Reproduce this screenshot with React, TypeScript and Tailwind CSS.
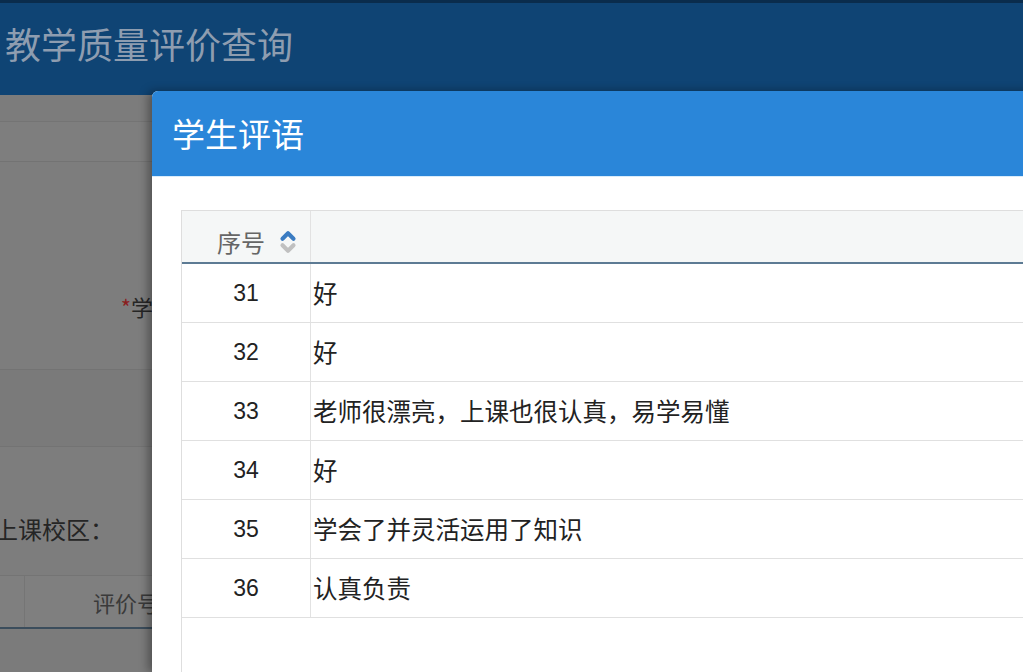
import { ChevronDown, ChevronUp } from 'lucide-react';

const rows = [
  { id: 31, text: '好' },
  { id: 32, text: '好' },
  { id: 33, text: '老师很漂亮，上课也很认真，易学易懂' },
  { id: 34, text: '好' },
  { id: 35, text: '学会了并灵活运用了知识' },
  { id: 36, text: '认真负责' },
];

const cjk = { fontFamily: '"Noto Sans CJK SC", "Noto Sans", sans-serif' };
const num = { fontFamily: '"Liberation Sans", Arial, sans-serif' };

function BackgroundPage() {
  return (
    <div className="flex flex-col h-full">
      <div className="h-[95px] shrink-0 bg-[#0f4474] border-t-[3px] border-[#0a2c4c] flex items-start pt-[22px] pl-[5px]">
        <span className="text-[36px] text-[#8e9db0] leading-none" style={cjk}>
          教学质量评价查询
        </span>
      </div>
      <div className="h-[27px] shrink-0 bg-[#7c7c7c] border-b border-[#747474]" />
      <div className="h-[40px] shrink-0 bg-[#7e7e7e] border-b border-[#737373]" />
      <div className="h-[208px] shrink-0 bg-[#7d7d7d] border-b border-[#737373] flex items-end justify-end pr-[870px] pb-[52px]">
        <span className="text-[22px] text-[#262626] leading-none" style={cjk}>
          <span className="text-[#8a1f1f]">*</span>学
        </span>
      </div>
      <div className="h-[77px] shrink-0 bg-[#7a7a7a] border-b border-[#737373]" />
      <div className="h-[128px] shrink-0 bg-[#7d7d7d] flex items-end pb-[34px]">
        <span className="text-[24px] text-[#252525] leading-none -ml-[6px]" style={cjk}>
          上课校区：
        </span>
      </div>
      <div className="h-[54px] shrink-0 bg-[#7f7f7f] border-t border-[#747474] border-b-2 border-b-[#3b4d5c] flex">
        <div className="w-[25px] border-r border-[#757575]" />
        <div className="flex-1 flex items-center pl-[68px]">
          <span className="text-[22px] text-[#3a3a3a] leading-none" style={cjk}>
            评价号
          </span>
        </div>
      </div>
      <div className="flex-1 bg-[#7b7b7b]" />
    </div>
  );
}

function SortIcon() {
  return (
    <span className="relative inline-block w-[22px] h-[28px] ml-[12px]">
      <ChevronUp className="absolute left-0 top-[-3px] text-[#3b7cc2]" size={22} strokeWidth={4.5} />
      <ChevronDown className="absolute left-0 top-[9px] text-[#c0c0c0]" size={22} strokeWidth={4.5} />
    </span>
  );
}

function CommentModal() {
  return (
    <div className="absolute left-[152px] top-[91px] w-[900px] bottom-0 bg-white rounded-tl-[6px] shadow-[-4px_0_10px_rgba(0,0,0,0.35)] flex flex-col overflow-hidden">
      <div className="h-[86px] shrink-0 bg-[#2a86d9] border-b border-[#d9ecfb] flex items-center pl-[20px]">
        <span className="text-[33px] text-white leading-none" style={cjk}>
          学生评语
        </span>
      </div>
      <div className="flex-1 pt-[33px] pl-[29px]">
        <div className="h-full border-l border-[#dedede]">
          <div className="h-[54px] bg-[#f5f7f7] border-t border-[#dedede] border-b-2 border-b-[#5d7b94] flex">
            <div className="w-[129px] border-r border-[#e2e2e2] flex items-center pl-[35px] pt-[10px]">
              <span className="text-[24px] text-[#666] leading-none" style={cjk}>
                序号
              </span>
              <SortIcon />
            </div>
            <div className="flex-1" />
          </div>
          {rows.map((r) => (
            <div key={r.id} className="h-[59px] border-b border-[#e0e0e0] flex">
              <div className="w-[129px] border-r border-[#e2e2e2] flex items-center justify-center">
                <span className="text-[23px] text-[#222] leading-none" style={num}>
                  {r.id}
                </span>
              </div>
              <div className="flex-1 flex items-center pl-[2px]">
                <span className="text-[24.5px] text-[#222] leading-none" style={cjk}>
                  {r.text}
                </span>
              </div>
            </div>
          ))}
        </div>
      </div>
    </div>
  );
}

export default function App() {
  return (
    <div className="relative w-[1023px] h-[672px] overflow-hidden bg-[#7b7b7b]">
      <BackgroundPage />
      <CommentModal />
    </div>
  );
}
